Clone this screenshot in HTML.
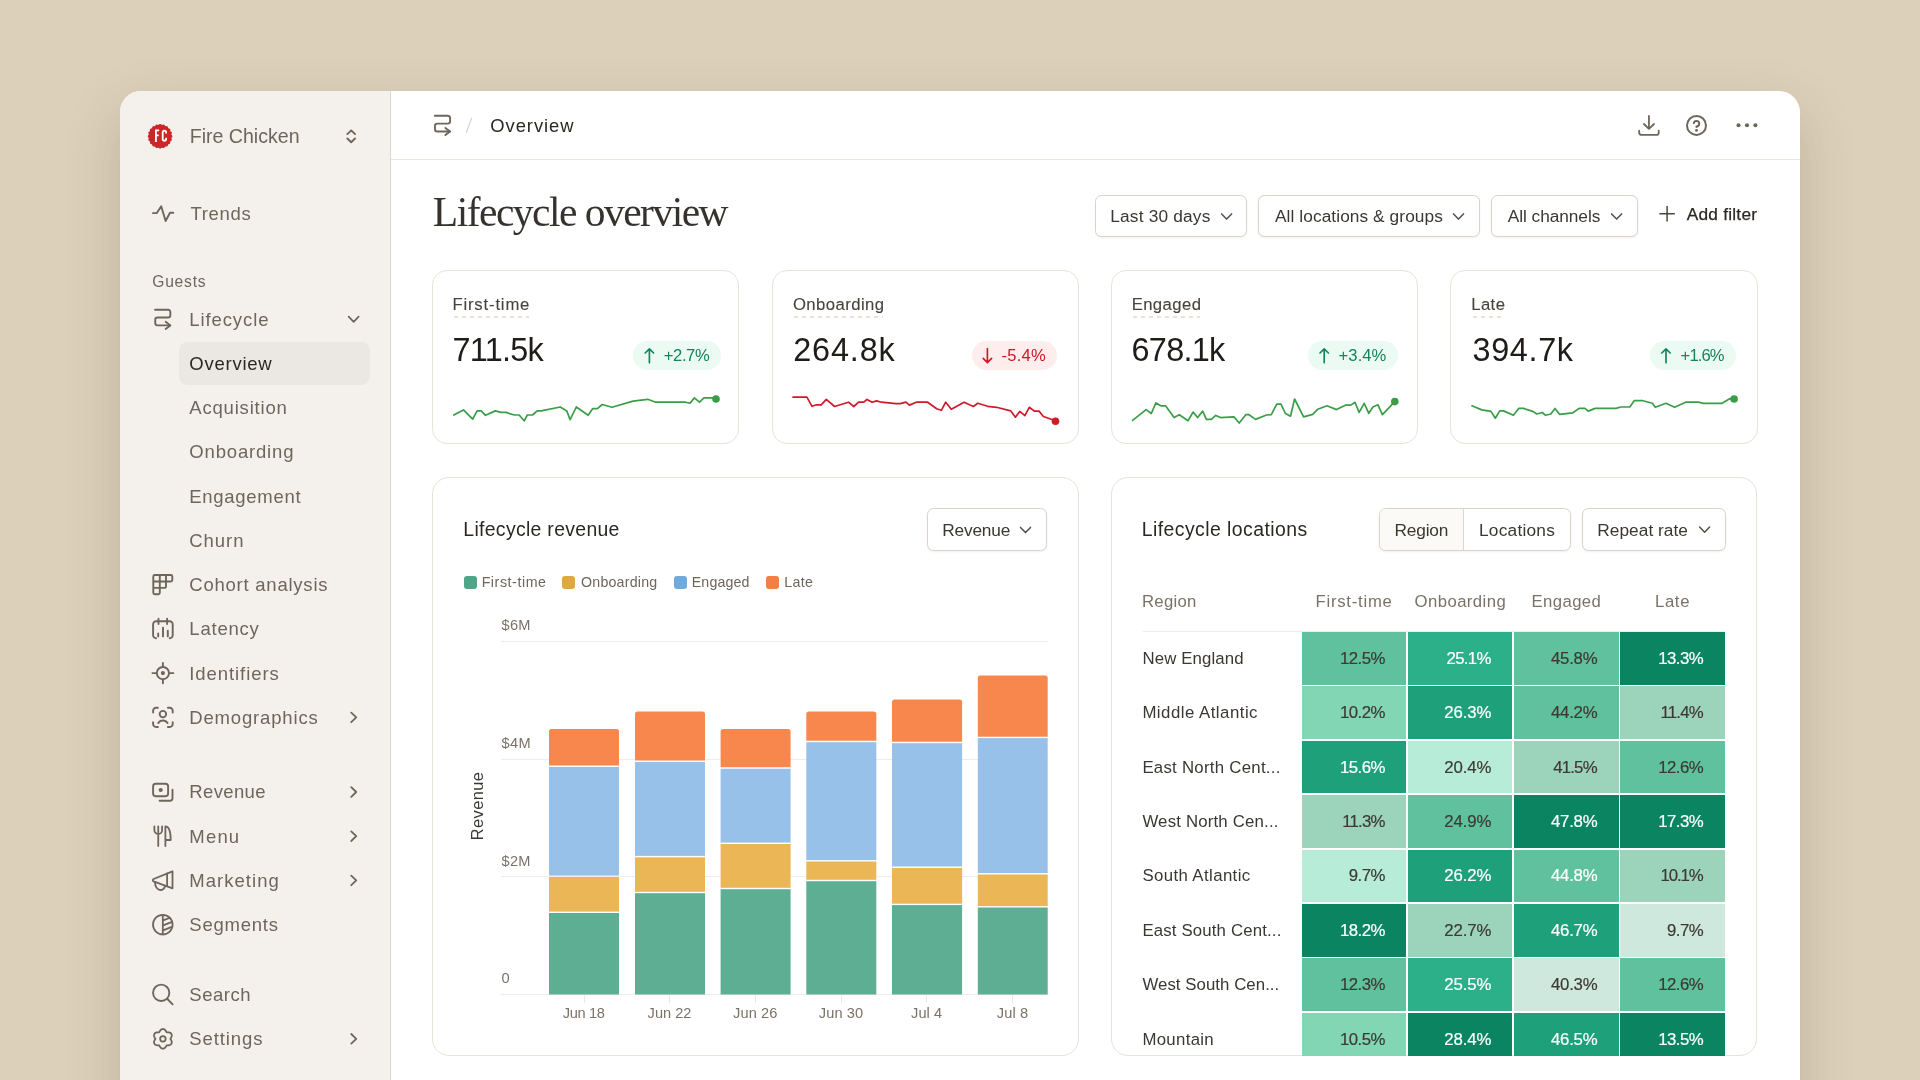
<!DOCTYPE html>
<html lang="en"><head><meta charset="utf-8"><title>Lifecycle overview</title>
<style>
*{box-sizing:border-box;margin:0;padding:0}
html,body{width:1920px;height:1080px;overflow:hidden}
body{background:#dcd0bb;font-family:"Liberation Sans",sans-serif;position:relative}
.win{position:absolute;left:120px;top:91px;width:1680px;height:1100px;border-radius:21px;background:#fff;box-shadow:0 22px 54px 0 rgba(84,68,38,.21);overflow:hidden}
.side{position:absolute;left:0;top:0;width:270.5px;height:100%;background:#f4f1ec;border-right:1.2px solid #ded7cc}
.hline{position:absolute;left:271px;top:68px;right:0;height:1px;background:#ebe7e0}
.abs{position:absolute}
.t{position:absolute;white-space:nowrap;line-height:1;font-kerning:normal}
.tl{position:absolute;left:0;top:0;width:1920px;height:1080px;will-change:transform}
.sf{font-family:"Liberation Serif",serif}
.pill{position:absolute;left:178.8px;top:342.3px;width:190.8px;height:42.6px;border-radius:8.5px;background:#ebe7e2}
.card{position:absolute;border:1.3px solid #e8e3db;border-radius:15px;background:#fff}
.btn{position:absolute;border:1px solid #dad3c7;border-radius:6.5px;background:#fff;box-shadow:0 1px 2px rgba(80,60,30,.08)}
.dash{position:absolute;height:1.5px;background:repeating-linear-gradient(90deg,#e8e2d9 0,#e8e2d9 3.6px,transparent 3.6px,transparent 8px)}
.badge{position:absolute;height:28.8px;border-radius:14.4px}
.hc{position:absolute}
.grid{position:absolute;height:1px;background:#f0ede8;left:500.8px;width:546.8px}
.tick{position:absolute;width:1px;height:7.5px;top:995px;background:#ebe7e1}
.lsq{position:absolute;width:13.2px;height:13.2px;top:576.2px;border-radius:3px}
svg.ov{position:absolute;left:0;top:0;width:1920px;height:1080px;overflow:visible}
</style></head><body>
<div class="win"><div class="side"></div><div class="hline"></div></div>
<div class="pill"></div>

<div class="btn" style="left:1094.6px;top:194.8px;width:152.6px;height:42.2px"></div>
<div class="btn" style="left:1258px;top:194.8px;width:221.8px;height:42.2px"></div>
<div class="btn" style="left:1490.6px;top:194.8px;width:147.2px;height:42.2px"></div>
<div class="card" style="left:432.05px;top:269.7px;width:307.2px;height:174.55px"></div>
<div class="dash" style="left:453.8px;top:316.4px;width:74.9px"></div>
<div class="card" style="left:771.50px;top:269.7px;width:307.2px;height:174.55px"></div>
<div class="dash" style="left:793.7px;top:316.4px;width:89.4px"></div>
<div class="card" style="left:1110.95px;top:269.7px;width:307.2px;height:174.55px"></div>
<div class="dash" style="left:1133.0px;top:316.4px;width:66.9px"></div>
<div class="card" style="left:1450.40px;top:269.7px;width:307.2px;height:174.55px"></div>
<div class="dash" style="left:1472.6px;top:316.4px;width:31.6px"></div>
<div class="badge" style="left:633.3px;top:341.3px;width:87.6px;background:#ebfaf2"></div>
<div class="badge" style="left:971.7px;top:341.3px;width:85.6px;background:#fdeeed"></div>
<div class="badge" style="left:1308.3px;top:341.3px;width:89.6px;background:#ebfaf2"></div>
<div class="badge" style="left:1650.4px;top:341.3px;width:85.6px;background:#ebfaf2"></div>
<div class="card" style="left:432px;top:476.6px;width:646.6px;height:579.4px;border-radius:17px"></div>
<div class="card" style="left:1110.7px;top:476.6px;width:646.8px;height:579.4px;border-radius:17px;overflow:hidden"></div>
<div class="btn" style="left:926.8px;top:508.2px;width:120.5px;height:42.4px"></div>
<div class="btn" style="left:1379.2px;top:508.2px;width:191.8px;height:42.4px;overflow:hidden"><div style="position:absolute;left:0;top:0;width:84px;height:100%;background:#fbfaf7;border-right:1px solid #ddd6cb"></div></div>
<div class="btn" style="left:1581.8px;top:508.2px;width:143.9px;height:42.4px"></div>
<div class="lsq" style="left:463.8px;background:#4fa588"></div>
<div class="lsq" style="left:562.1px;background:#e0a840"></div>
<div class="lsq" style="left:673.8px;background:#70a9dc"></div>
<div class="lsq" style="left:766.2px;background:#f27f45"></div>
<div class="grid" style="top:640.7px"></div>
<div class="grid" style="top:758.5px"></div>
<div class="grid" style="top:876.1px"></div>
<div class="grid" style="top:993.9px"></div>
<div class="tick" style="left:583.5px"></div>
<div class="tick" style="left:669.2px"></div>
<div class="tick" style="left:754.9px"></div>
<div class="tick" style="left:840.7px"></div>
<div class="tick" style="left:926.4px"></div>
<div class="tick" style="left:1012.2px"></div>
<div class="abs" style="left:1143px;top:630.8px;width:581.5px;height:1px;background:#efece7"></div>
<div class="abs" style="left:0;top:0;width:1920px;height:1055.6px;overflow:hidden"><div class="hc" style="left:1302.0px;top:632.0px;width:104.4px;height:52.7px;background:#5fc19d"></div><div class="hc" style="left:1408.0px;top:632.0px;width:104.4px;height:52.7px;background:#2bb089"></div><div class="hc" style="left:1514.2px;top:632.0px;width:104.4px;height:52.7px;background:#5fc19d"></div><div class="hc" style="left:1620.2px;top:632.0px;width:104.4px;height:52.7px;background:#0b8561"></div><div class="hc" style="left:1302.0px;top:686.4px;width:104.4px;height:52.7px;background:#82d6b4"></div><div class="hc" style="left:1408.0px;top:686.4px;width:104.4px;height:52.7px;background:#1ea07a"></div><div class="hc" style="left:1514.2px;top:686.4px;width:104.4px;height:52.7px;background:#5fc19d"></div><div class="hc" style="left:1620.2px;top:686.4px;width:104.4px;height:52.7px;background:#9bd3bb"></div><div class="hc" style="left:1302.0px;top:740.8px;width:104.4px;height:52.7px;background:#1ea07a"></div><div class="hc" style="left:1408.0px;top:740.8px;width:104.4px;height:52.7px;background:#b7ecd9"></div><div class="hc" style="left:1514.2px;top:740.8px;width:104.4px;height:52.7px;background:#9bd3bb"></div><div class="hc" style="left:1620.2px;top:740.8px;width:104.4px;height:52.7px;background:#5fc19d"></div><div class="hc" style="left:1302.0px;top:795.2px;width:104.4px;height:52.7px;background:#9bd3bb"></div><div class="hc" style="left:1408.0px;top:795.2px;width:104.4px;height:52.7px;background:#5fc19d"></div><div class="hc" style="left:1514.2px;top:795.2px;width:104.4px;height:52.7px;background:#0b8561"></div><div class="hc" style="left:1620.2px;top:795.2px;width:104.4px;height:52.7px;background:#0b8561"></div><div class="hc" style="left:1302.0px;top:849.6px;width:104.4px;height:52.7px;background:#b7ecd9"></div><div class="hc" style="left:1408.0px;top:849.6px;width:104.4px;height:52.7px;background:#1ea07a"></div><div class="hc" style="left:1514.2px;top:849.6px;width:104.4px;height:52.7px;background:#5fc19d"></div><div class="hc" style="left:1620.2px;top:849.6px;width:104.4px;height:52.7px;background:#9bd3bb"></div><div class="hc" style="left:1302.0px;top:904.0px;width:104.4px;height:52.7px;background:#0b8561"></div><div class="hc" style="left:1408.0px;top:904.0px;width:104.4px;height:52.7px;background:#9bd3bb"></div><div class="hc" style="left:1514.2px;top:904.0px;width:104.4px;height:52.7px;background:#1ea07a"></div><div class="hc" style="left:1620.2px;top:904.0px;width:104.4px;height:52.7px;background:#cfe8dd"></div><div class="hc" style="left:1302.0px;top:958.4px;width:104.4px;height:52.7px;background:#5fc19d"></div><div class="hc" style="left:1408.0px;top:958.4px;width:104.4px;height:52.7px;background:#2bb089"></div><div class="hc" style="left:1514.2px;top:958.4px;width:104.4px;height:52.7px;background:#cfe8dd"></div><div class="hc" style="left:1620.2px;top:958.4px;width:104.4px;height:52.7px;background:#5fc19d"></div><div class="hc" style="left:1302.0px;top:1012.8px;width:104.4px;height:52.7px;background:#82d6b4"></div><div class="hc" style="left:1408.0px;top:1012.8px;width:104.4px;height:52.7px;background:#0b8561"></div><div class="hc" style="left:1514.2px;top:1012.8px;width:104.4px;height:52.7px;background:#1ea07a"></div><div class="hc" style="left:1620.2px;top:1012.8px;width:104.4px;height:52.7px;background:#0b8561"></div></div>
<svg class="ov" viewBox="0 0 1920 1080">
<path d="M549.0,765.6V731.5a2.5,2.5 0 0 1 2.5,-2.5H616.5a2.5,2.5 0 0 1 2.5,2.5V765.6Z" fill="#f8874e"/>
<rect x="549.0" y="767.0" width="70.0" height="108.6" fill="#98c1e9"/>
<rect x="549.0" y="877.0" width="70.0" height="34.6" fill="#ebb656"/>
<rect x="549.0" y="913.0" width="70.0" height="81.5" fill="#5eae93"/>
<path d="M635.0,760.6V714.0a2.5,2.5 0 0 1 2.5,-2.5H702.5a2.5,2.5 0 0 1 2.5,2.5V760.6Z" fill="#f8874e"/>
<rect x="635.0" y="762.0" width="70.0" height="93.9" fill="#98c1e9"/>
<rect x="635.0" y="857.3" width="70.0" height="34.5" fill="#ebb656"/>
<rect x="635.0" y="893.2" width="70.0" height="101.3" fill="#5eae93"/>
<path d="M720.6,767.3V731.5a2.5,2.5 0 0 1 2.5,-2.5H788.1a2.5,2.5 0 0 1 2.5,2.5V767.3Z" fill="#f8874e"/>
<rect x="720.6" y="768.7" width="70.0" height="73.9" fill="#98c1e9"/>
<rect x="720.6" y="844.0" width="70.0" height="43.8" fill="#ebb656"/>
<rect x="720.6" y="889.2" width="70.0" height="105.3" fill="#5eae93"/>
<path d="M806.3,740.8V714.0a2.5,2.5 0 0 1 2.5,-2.5H873.8a2.5,2.5 0 0 1 2.5,2.5V740.8Z" fill="#f8874e"/>
<rect x="806.3" y="742.2" width="70.0" height="117.9" fill="#98c1e9"/>
<rect x="806.3" y="861.5" width="70.0" height="18.3" fill="#ebb656"/>
<rect x="806.3" y="881.2" width="70.0" height="113.3" fill="#5eae93"/>
<path d="M892.0,741.8V702.0a2.5,2.5 0 0 1 2.5,-2.5H959.6a2.5,2.5 0 0 1 2.5,2.5V741.8Z" fill="#f8874e"/>
<rect x="892.0" y="743.2" width="70.1" height="123.3" fill="#98c1e9"/>
<rect x="892.0" y="867.9" width="70.1" height="35.8" fill="#ebb656"/>
<rect x="892.0" y="905.1" width="70.1" height="89.4" fill="#5eae93"/>
<path d="M977.8,736.7V678.1a2.5,2.5 0 0 1 2.5,-2.5H1045.2a2.5,2.5 0 0 1 2.5,2.5V736.7Z" fill="#f8874e"/>
<rect x="977.8" y="738.1" width="69.9" height="135.0" fill="#98c1e9"/>
<rect x="977.8" y="874.5" width="69.9" height="31.6" fill="#ebb656"/>
<rect x="977.8" y="907.5" width="69.9" height="87.0" fill="#5eae93"/>
<path d="M453.8,415.0 L463.5,409.9 L472.7,419.1 L477.1,410.9 L481.2,410.9 L485.5,415.3 L495.3,410.9 L501.1,412.4 L506.0,412.4 L514.3,415.0 L519.1,415.0 L524.2,420.8 L527.4,415.0 L532.5,415.0 L537.2,410.9 L541.3,410.9 L560.2,407.0 L566.8,410.9 L570.1,419.7 L576.3,407.0 L588.2,415.3 L592.6,408.7 L597.4,408.7 L602.2,404.5 L612.0,407.3 L633.1,401.1 L647.7,399.3 L655.7,402.2 L685.6,402.2 L690.0,403.3 L694.4,397.9 L699.5,402.2 L703.9,397.9 L712.6,397.9 L716.0,399.0" fill="none" stroke="#3b9d48" stroke-width="1.7" stroke-linejoin="round" stroke-linecap="round"/><circle cx="716.0" cy="399.0" r="3.8" fill="#3b9d48"/>
<path d="M793.0,397.1 L806.9,397.1 L812.0,406.3 L816.4,404.8 L821.2,404.8 L826.3,399.4 L834.6,406.5 L848.4,402.2 L853.8,406.5 L858.6,402.2 L863.8,402.2 L867.0,399.4 L872.2,402.2 L876.6,400.9 L881.3,402.2 L895.8,403.6 L900.2,403.6 L906.0,402.2 L909.4,405.1 L916.3,402.2 L927.6,402.2 L936.7,408.7 L941.3,410.3 L945.7,402.2 L951.3,409.2 L964.1,402.2 L973.4,406.5 L977.8,403.3 L987.7,406.3 L996.5,407.3 L1010.8,410.9 L1015.4,417.2 L1019.8,411.4 L1024.9,415.7 L1029.3,407.3 L1034.4,411.1 L1039.0,411.1 L1043.4,416.5 L1052.6,419.7 L1055.5,421.3" fill="none" stroke="#cf1a2b" stroke-width="1.7" stroke-linejoin="round" stroke-linecap="round"/><circle cx="1055.5" cy="421.3" r="3.8" fill="#cf1a2b"/>
<path d="M1132.6,420.4 L1146.1,409.6 L1151.3,413.5 L1155.9,402.9 L1160.7,405.8 L1165.5,405.8 L1174.1,417.5 L1179.3,414.7 L1188.0,420.8 L1193.1,412.1 L1197.6,417.5 L1202.7,411.1 L1206.4,419.4 L1211.3,419.4 L1215.7,415.4 L1220.5,417.6 L1233.9,416.9 L1239.2,423.0 L1245.8,414.7 L1249.0,414.7 L1255.5,419.4 L1266.5,415.0 L1271.3,414.7 L1276.7,404.1 L1281.0,404.1 L1285.4,413.5 L1290.5,416.2 L1294.6,399.0 L1303.6,416.9 L1312.7,414.4 L1317.8,409.2 L1327.0,405.8 L1336.5,409.6 L1345.9,405.1 L1350.8,405.1 L1355.0,402.3 L1359.1,412.4 L1364.2,403.3 L1368.8,413.3 L1372.9,407.0 L1378.0,404.8 L1382.4,414.7 L1394.8,401.6" fill="none" stroke="#3b9d48" stroke-width="1.7" stroke-linejoin="round" stroke-linecap="round"/><circle cx="1394.8" cy="401.6" r="3.8" fill="#3b9d48"/>
<path d="M1472.0,405.8 L1481.8,409.9 L1491.0,411.4 L1495.3,418.2 L1499.7,410.9 L1503.6,410.9 L1513.4,415.3 L1518.7,408.4 L1523.6,408.4 L1532.8,411.4 L1536.8,414.0 L1542.3,412.5 L1545.6,415.3 L1550.8,414.0 L1555.0,408.4 L1559.5,414.3 L1572.9,412.8 L1579.2,408.4 L1584.9,408.4 L1588.2,411.1 L1595.2,408.4 L1615.9,408.4 L1620.8,407.0 L1629.8,407.0 L1634.2,400.7 L1642.9,400.7 L1652.4,403.3 L1655.3,407.3 L1666.0,403.3 L1674.6,407.3 L1685.7,402.2 L1698.3,402.2 L1703.4,403.3 L1722.0,403.3 L1729.7,398.7 L1734.1,399.0" fill="none" stroke="#3b9d48" stroke-width="1.7" stroke-linejoin="round" stroke-linecap="round"/><circle cx="1734.1" cy="399.0" r="3.8" fill="#3b9d48"/>
<path d="M172.47,136.30L172.36,136.73L172.09,137.14L171.78,137.53L171.54,137.91L171.48,138.31L171.58,138.74L171.77,139.21L171.90,139.68L171.86,140.12L171.63,140.50L171.25,140.80L170.83,141.08L170.49,141.37L170.30,141.72L170.27,142.17L170.30,142.67L170.27,143.16L170.11,143.57L169.77,143.86L169.31,144.03L168.82,144.16L168.41,144.33L168.13,144.61L167.96,145.02L167.83,145.51L167.66,145.97L167.37,146.31L166.96,146.47L166.47,146.50L165.97,146.47L165.52,146.50L165.17,146.69L164.88,147.03L164.60,147.45L164.30,147.83L163.92,148.06L163.48,148.10L163.01,147.97L162.54,147.78L162.11,147.68L161.71,147.74L161.33,147.98L160.94,148.29L160.53,148.56L160.10,148.67L159.67,148.56L159.26,148.29L158.87,147.98L158.49,147.74L158.09,147.68L157.66,147.78L157.19,147.97L156.72,148.10L156.28,148.06L155.90,147.83L155.60,147.45L155.32,147.03L155.03,146.69L154.68,146.50L154.23,146.47L153.73,146.50L153.24,146.47L152.83,146.31L152.54,145.97L152.37,145.51L152.24,145.02L152.07,144.61L151.79,144.33L151.38,144.16L150.89,144.03L150.43,143.86L150.09,143.57L149.93,143.16L149.90,142.67L149.93,142.17L149.90,141.72L149.71,141.37L149.37,141.08L148.95,140.80L148.57,140.50L148.34,140.12L148.30,139.68L148.43,139.21L148.62,138.74L148.72,138.31L148.66,137.91L148.42,137.53L148.11,137.14L147.84,136.73L147.73,136.30L147.84,135.87L148.11,135.46L148.42,135.07L148.66,134.69L148.72,134.29L148.62,133.86L148.43,133.39L148.30,132.92L148.34,132.48L148.57,132.10L148.95,131.80L149.37,131.52L149.71,131.23L149.90,130.88L149.93,130.43L149.90,129.93L149.93,129.44L150.09,129.03L150.43,128.74L150.89,128.57L151.38,128.44L151.79,128.27L152.07,127.99L152.24,127.58L152.37,127.09L152.54,126.63L152.83,126.29L153.24,126.13L153.73,126.10L154.23,126.13L154.68,126.10L155.03,125.91L155.32,125.57L155.60,125.15L155.90,124.77L156.28,124.54L156.72,124.50L157.19,124.63L157.66,124.82L158.09,124.92L158.49,124.86L158.87,124.62L159.26,124.31L159.67,124.04L160.10,123.93L160.53,124.04L160.94,124.31L161.33,124.62L161.71,124.86L162.11,124.92L162.54,124.82L163.01,124.63L163.48,124.50L163.92,124.54L164.30,124.77L164.60,125.15L164.88,125.57L165.17,125.91L165.52,126.10L165.97,126.13L166.47,126.10L166.96,126.13L167.37,126.29L167.66,126.63L167.83,127.09L167.96,127.58L168.13,127.99L168.41,128.27L168.82,128.44L169.31,128.57L169.77,128.74L170.11,129.03L170.27,129.44L170.30,129.93L170.27,130.43L170.30,130.88L170.49,131.23L170.83,131.52L171.25,131.80L171.63,132.10L171.86,132.48L171.90,132.92L171.77,133.39L171.58,133.86L171.48,134.29L171.54,134.69L171.78,135.07L172.09,135.46L172.36,135.87Z" fill="#c92728"/>
<path d="M155.0,129.5h4.15v1.8h-2.3v3.3h1.9v1.75h-1.9v5.6h-1.85z" fill="#fff"/>
<path d="M167.0,133.6v-1.3a2.6,2.6 0 0 0 -5.2,0v6.8a2.6,2.6 0 0 0 5.2,0v-1.4h-1.8v1.3a0.8,0.8 0 0 1 -1.6,0v-6.6a0.8,0.8 0 0 1 1.6,0v1.2z" fill="#fff"/>
<g transform="translate(351.2,136.3)" fill="none" stroke="#6e665b" stroke-width="1.9" stroke-linecap="round" stroke-linejoin="round"><path d="M-3.85,-2.2L0,-5.9L3.85,-2.2"/><path d="M-3.85,2.2L0,5.9L3.85,2.2"/></g>
<g transform="translate(0,0)" fill="none" stroke="#6e665b" stroke-width="1.9" stroke-linecap="round" stroke-linejoin="round"><path d="M152.9,213.1H156.8L161.2,206.2L165.6,221L170,212.8H173.3"/></g>
<g transform="translate(162.75,319.5)" fill="none" stroke="#6e665b" stroke-width="1.9" stroke-linecap="round" stroke-linejoin="round"><path d="M-7.7,-9.8H5.3a2.3,2.3 0 0 1 2.3,2.3V-4.3a2.3,2.3 0 0 1 -2.3,2.3H-5.2a2.3,2.3 0 0 0 -2.3,2.3V3.6a2.3,2.3 0 0 0 2.3,2.3H7.4"/><path d="M2.9,2.3L7.6,5.9L2.9,9.5"/></g>
<g transform="translate(353.65,319.2)" fill="none" stroke="#6e665b" stroke-width="1.7" stroke-linecap="round" stroke-linejoin="round"><path d="M-5.0,-2.6L0,2.6L5.0,-2.6"/></g>
<g transform="translate(162.8,584.6)" fill="none" stroke="#6e665b" stroke-width="1.9" stroke-linecap="round" stroke-linejoin="round"><path d="M-8,-9.6H8a1.5,1.5 0 0 1 1.5,1.5V-4.6a1.5,1.5 0 0 1 -1.5,1.5H3.2V1.8a1.5,1.5 0 0 1 -1.5,1.5H-3V8.1a1.5,1.5 0 0 1 -1.5,1.5H-8a1.5,1.5 0 0 1 -1.5,-1.5V-8.1a1.5,1.5 0 0 1 1.5,-1.5Z"/><path stroke-linecap="butt" d="M-3,-9.6V3.3M3.2,-9.6V-3.1M-9.5,-3.1H3.2M-9.5,3.3H-3"/></g>
<g transform="translate(162.9,629.0)" fill="none" stroke="#6e665b" stroke-width="1.9" stroke-linecap="round" stroke-linejoin="round"><path d="M-6.9,9.2H-6.8a3,3 0 0 1 -3,-3V-4.7a3,3 0 0 1 3,-3H6.8a3,3 0 0 1 3,3V6.2a3,3 0 0 1 -3,3"/><path d="M-4.4,-10.3V-4.9M4.2,-10.3V-4.9M-4.7,4.4V7.4M0.1,-1.4V7.4M4.9,1.7V7.4"/></g>
<g transform="translate(162.9,673.1)" fill="none" stroke="#6e665b" stroke-width="1.9" stroke-linecap="round" stroke-linejoin="round"><circle r="6.1"/><circle r="2.1" fill="#6e665b" stroke="none"/><path d="M-10.5,0H-6.5M6.5,0H10.5M0,-10.2V-6.5M0,6.5V10.2"/></g>
<g transform="translate(162.9,717.4)" fill="none" stroke="#6e665b" stroke-width="1.9" stroke-linecap="round" stroke-linejoin="round"><path d="M-9.8,-4.8V-6.6a3,3 0 0 1 3,-3H-5M5,-9.6H6.8a3,3 0 0 1 3,3V-4.8M9.8,4.8V6.6a3,3 0 0 1 -3,3H5M-5,9.6H-6.8a3,3 0 0 1 -3,-3V4.8"/><circle cy="-3.3" r="3.25"/><path d="M-4.6,5.7A5.4,5.4 0 0 1 4.6,5.7"/></g>
<g transform="translate(353.75,717.4)" fill="none" stroke="#6e665b" stroke-width="1.8" stroke-linecap="round" stroke-linejoin="round"><path d="M-2.5,-4.8L2.5,0L-2.5,4.8"/></g>
<g transform="translate(0,0)" fill="none" stroke="#6e665b" stroke-width="1.9" stroke-linecap="round" stroke-linejoin="round"><rect x="153.1" y="783.8" width="15" height="12.4" rx="2.6"/><circle cx="160.7" cy="790" r="2.1" fill="#6e665b" stroke="none"/><path d="M172.5,789.7V798.4a2.3,2.3 0 0 1 -2.3,2.3H159.6"/></g>
<g transform="translate(353.75,792.0)" fill="none" stroke="#6e665b" stroke-width="1.8" stroke-linecap="round" stroke-linejoin="round"><path d="M-2.5,-4.8L2.5,0L-2.5,4.8"/></g>
<g transform="translate(0,0)" fill="none" stroke="#6e665b" stroke-width="1.8" stroke-linecap="round" stroke-linejoin="round"><path d="M158.25,826.3V846M154.4,826.3V830.2a3.85,3.85 0 0 0 7.7,0V826.3"/><path d="M165.4,846V826.4C168.6,826.4 170.7,830.5 170.7,840H165.4"/></g>
<g transform="translate(353.75,836.2)" fill="none" stroke="#6e665b" stroke-width="1.8" stroke-linecap="round" stroke-linejoin="round"><path d="M-2.5,-4.8L2.5,0L-2.5,4.8"/></g>
<g transform="translate(0,0)" fill="none" stroke="#6e665b" stroke-width="1.8" stroke-linecap="round" stroke-linejoin="round"><path d="M172.5,871.3V888.3L153.6,881.4a1.3,1.3 0 0 1 0,-2.4Z"/><path d="M167.1,873.4V886.2"/><path d="M155,882.6C155,887 158,890 160.3,890C162.6,890 164.4,888.6 165,886.2"/></g>
<g transform="translate(353.75,880.4)" fill="none" stroke="#6e665b" stroke-width="1.8" stroke-linecap="round" stroke-linejoin="round"><path d="M-2.5,-4.8L2.5,0L-2.5,4.8"/></g>
<g transform="translate(162.8,924.6)" fill="none" stroke="#6e665b" stroke-width="1.8" stroke-linecap="round" stroke-linejoin="round"><circle r="9.8"/><path d="M0,-9.8V9.8M0.3,-4.3L6.8,-6.8M0.3,0.7L9.3,-2.8M0.3,5.8L8.3,2.6"/></g>
<g transform="translate(0,0)" fill="none" stroke="#6e665b" stroke-width="1.9" stroke-linecap="round" stroke-linejoin="round"><circle cx="161.2" cy="992.8" r="8.15"/><path d="M167.4,999L172.6,1004.3"/></g>
<g transform="translate(162.9,1038.8)" fill="none" stroke="#6e665b" stroke-width="1.8" stroke-linecap="round" stroke-linejoin="round"><path d="M7.50,0.00L7.72,0.40L7.99,0.84L8.26,1.31L8.50,1.81L8.69,2.33L8.81,2.86L8.86,3.40L8.83,3.93L8.70,4.43L8.49,4.90L8.19,5.32L7.82,5.68L7.38,5.97L6.89,6.20L6.36,6.36L5.81,6.46L5.26,6.50L4.72,6.50L4.21,6.48L3.75,6.50L3.51,6.89L3.27,7.34L3.00,7.81L2.69,8.26L2.33,8.69L1.93,9.07L1.49,9.38L1.01,9.61L0.51,9.75L0.00,9.80L-0.51,9.75L-1.01,9.61L-1.49,9.38L-1.93,9.07L-2.33,8.69L-2.69,8.26L-3.00,7.81L-3.27,7.34L-3.51,6.89L-3.75,6.50L-4.21,6.48L-4.72,6.50L-5.26,6.50L-5.81,6.46L-6.36,6.36L-6.89,6.20L-7.38,5.97L-7.82,5.68L-8.19,5.32L-8.49,4.90L-8.70,4.43L-8.83,3.93L-8.86,3.40L-8.81,2.86L-8.69,2.33L-8.50,1.81L-8.26,1.31L-7.99,0.84L-7.72,0.40L-7.50,0.00L-7.72,-0.40L-7.99,-0.84L-8.26,-1.31L-8.50,-1.81L-8.69,-2.33L-8.81,-2.86L-8.86,-3.40L-8.83,-3.93L-8.70,-4.43L-8.49,-4.90L-8.19,-5.32L-7.82,-5.68L-7.38,-5.97L-6.89,-6.20L-6.36,-6.36L-5.81,-6.46L-5.26,-6.50L-4.72,-6.50L-4.21,-6.48L-3.75,-6.50L-3.51,-6.89L-3.27,-7.34L-3.00,-7.81L-2.69,-8.26L-2.33,-8.69L-1.93,-9.07L-1.49,-9.38L-1.01,-9.61L-0.51,-9.75L-0.00,-9.80L0.51,-9.75L1.01,-9.61L1.49,-9.38L1.93,-9.07L2.33,-8.69L2.69,-8.26L3.00,-7.81L3.27,-7.34L3.51,-6.89L3.75,-6.50L4.21,-6.48L4.72,-6.50L5.26,-6.50L5.81,-6.46L6.36,-6.36L6.89,-6.20L7.38,-5.97L7.82,-5.68L8.19,-5.32L8.49,-4.90L8.70,-4.43L8.83,-3.93L8.86,-3.40L8.81,-2.86L8.69,-2.33L8.50,-1.81L8.26,-1.31L7.99,-0.84L7.72,-0.40Z"/><circle r="2.75"/></g>
<g transform="translate(353.75,1038.8)" fill="none" stroke="#6e665b" stroke-width="1.8" stroke-linecap="round" stroke-linejoin="round"><path d="M-2.5,-4.8L2.5,0L-2.5,4.8"/></g>
<g transform="translate(442.5,125.6)" fill="none" stroke="#6e665b" stroke-width="1.9" stroke-linecap="round" stroke-linejoin="round"><path d="M-7.7,-9.8H5.3a2.3,2.3 0 0 1 2.3,2.3V-4.3a2.3,2.3 0 0 1 -2.3,2.3H-5.2a2.3,2.3 0 0 0 -2.3,2.3V3.6a2.3,2.3 0 0 0 2.3,2.3H7.4"/><path d="M2.9,2.3L7.6,5.9L2.9,9.5"/></g>
<path d="M466.2,133L471.8,117.6" stroke="#d9d3c9" stroke-width="1.2" fill="none"/>
<g transform="translate(0,0)" fill="none" stroke="#6e665b" stroke-width="1.8" stroke-linecap="round" stroke-linejoin="round"><path d="M1648.95,115.8V128.6M1643.9,124L1648.95,128.9L1654,124"/><path d="M1639.2,130.6V132.7a2.2,2.2 0 0 0 2.2,2.2H1656.5a2.2,2.2 0 0 0 2.2,-2.2V130.6"/></g>
<g transform="translate(1696.5,125.4)" fill="none" stroke="#6e665b" stroke-width="2.0" stroke-linecap="round" stroke-linejoin="round"><circle r="9.5"/><path d="M-2.7,-2.3A2.75,2.75 0 1 1 0,1.0V1.5"/><circle cy="5" r="1.45" fill="#6e665b" stroke="none"/></g>
<circle cx="1738.5" cy="125.3" r="2.05" fill="#6e665b"/>
<circle cx="1747.0" cy="125.3" r="2.05" fill="#6e665b"/>
<circle cx="1755.4" cy="125.3" r="2.05" fill="#6e665b"/>
<g transform="translate(1226.6,216.5)" fill="none" stroke="#57514a" stroke-width="1.5" stroke-linecap="round" stroke-linejoin="round"><path d="M-5.0,-2.6L0,2.6L5.0,-2.6"/></g>
<g transform="translate(1458.5,216.5)" fill="none" stroke="#57514a" stroke-width="1.5" stroke-linecap="round" stroke-linejoin="round"><path d="M-5.0,-2.6L0,2.6L5.0,-2.6"/></g>
<g transform="translate(1616.6,216.5)" fill="none" stroke="#57514a" stroke-width="1.5" stroke-linecap="round" stroke-linejoin="round"><path d="M-5.0,-2.6L0,2.6L5.0,-2.6"/></g>
<g transform="translate(1025.5,530.0)" fill="none" stroke="#57514a" stroke-width="1.5" stroke-linecap="round" stroke-linejoin="round"><path d="M-5.0,-2.6L0,2.6L5.0,-2.6"/></g>
<g transform="translate(1704.6,529.7)" fill="none" stroke="#57514a" stroke-width="1.5" stroke-linecap="round" stroke-linejoin="round"><path d="M-5.0,-2.6L0,2.6L5.0,-2.6"/></g>
<g transform="translate(1667.1,213.7)" fill="none" stroke="#4b463f" stroke-width="1.5" stroke-linecap="round" stroke-linejoin="round"><path d="M-7.2,0H7.2M0,-7.2V7.2"/></g>
<g transform="translate(649.4,355.6)" fill="none" stroke="#12845e" stroke-width="1.65" stroke-linecap="round" stroke-linejoin="round"><path d="M0,7.2V-6.6M-4.2,-2.6L0,-6.8L4.2,-2.6"/></g>
<g transform="translate(987.4,355.8)" fill="none" stroke="#cd1628" stroke-width="1.65" stroke-linecap="round" stroke-linejoin="round"><path d="M0,-7.2V6.6M-4.2,2.6L0,6.8L4.2,2.6"/></g>
<g transform="translate(1324.2,355.6)" fill="none" stroke="#12845e" stroke-width="1.65" stroke-linecap="round" stroke-linejoin="round"><path d="M0,7.2V-6.6M-4.2,-2.6L0,-6.8L4.2,-2.6"/></g>
<g transform="translate(1666.0,355.6)" fill="none" stroke="#12845e" stroke-width="1.65" stroke-linecap="round" stroke-linejoin="round"><path d="M0,7.2V-6.6M-4.2,-2.6L0,-6.8L4.2,-2.6"/></g>
</svg>
<div class="tl">
<span class="t" style="top:126.96px;font-size:19.6px;color:#6e665b;letter-spacing:-0.012px;left:189.69px;">Fire Chicken</span>
<span class="t" style="top:204.89px;font-size:18.5px;color:#6e665b;letter-spacing:0.719px;left:190.38px;">Trends</span>
<span class="t" style="top:274.44px;font-size:15.6px;color:#6e665b;letter-spacing:0.786px;left:152.22px;">Guests</span>
<span class="t" style="top:310.89px;font-size:18.5px;color:#6e665b;letter-spacing:0.895px;left:189.30px;">Lifecycle</span>
<span class="t" style="top:355.09px;font-size:18.5px;color:#2b2723;letter-spacing:0.762px;left:189.30px;">Overview</span>
<span class="t" style="top:399.29px;font-size:18.5px;color:#6e665b;letter-spacing:0.807px;left:189.30px;">Acquisition</span>
<span class="t" style="top:443.49px;font-size:18.5px;color:#6e665b;letter-spacing:0.832px;left:189.30px;">Onboarding</span>
<span class="t" style="top:487.69px;font-size:18.5px;color:#6e665b;letter-spacing:0.705px;left:189.30px;">Engagement</span>
<span class="t" style="top:531.89px;font-size:18.5px;color:#6e665b;letter-spacing:0.963px;left:189.30px;">Churn</span>
<span class="t" style="top:576.09px;font-size:18.5px;color:#6e665b;letter-spacing:0.765px;left:189.30px;">Cohort analysis</span>
<span class="t" style="top:620.29px;font-size:18.5px;color:#6e665b;letter-spacing:0.793px;left:189.30px;">Latency</span>
<span class="t" style="top:664.69px;font-size:18.5px;color:#6e665b;letter-spacing:0.927px;left:189.30px;">Identifiers</span>
<span class="t" style="top:708.89px;font-size:18.5px;color:#6e665b;letter-spacing:0.837px;left:189.30px;">Demographics</span>
<span class="t" style="top:783.39px;font-size:18.5px;color:#6e665b;letter-spacing:0.348px;left:189.30px;">Revenue</span>
<span class="t" style="top:827.59px;font-size:18.5px;color:#6e665b;letter-spacing:1.190px;left:189.30px;">Menu</span>
<span class="t" style="top:871.89px;font-size:18.5px;color:#6e665b;letter-spacing:1.035px;left:189.30px;">Marketing</span>
<span class="t" style="top:916.09px;font-size:18.5px;color:#6e665b;letter-spacing:0.759px;left:189.30px;">Segments</span>
<span class="t" style="top:985.89px;font-size:18.5px;color:#6e665b;letter-spacing:0.505px;left:189.30px;">Search</span>
<span class="t" style="top:1030.09px;font-size:18.5px;color:#6e665b;letter-spacing:0.895px;left:189.30px;">Settings</span>
<span class="t" style="top:117.17px;font-size:18.4px;color:#2b2723;letter-spacing:0.935px;left:490.33px;">Overview</span>
<span class="t sf" style="top:191.54px;font-size:41.5px;color:#36322d;letter-spacing:-1.510px;left:432.80px;">Lifecycle overview</span>
<span class="t" style="top:208.11px;font-size:17.3px;color:#3b3732;letter-spacing:0.186px;left:1110.28px;">Last 30 days</span>
<span class="t" style="top:208.11px;font-size:17.3px;color:#3b3732;letter-spacing:0.081px;left:1274.97px;">All locations &amp; groups</span>
<span class="t" style="top:208.11px;font-size:17.3px;color:#3b3732;letter-spacing:-0.066px;left:1507.87px;">All channels</span>
<span class="t" style="top:205.61px;font-size:17.3px;color:#2b2723;letter-spacing:0.239px;-webkit-text-stroke:0.25px #2b2723;left:1686.67px;">Add filter</span>
<span class="t" style="top:296.81px;font-size:16.7px;color:#48433d;letter-spacing:0.827px;-webkit-text-stroke:0.12px #48433d;left:452.43px;">First-time</span>
<span class="t" style="top:334.32px;font-size:32.4px;color:#1f1c19;letter-spacing:-0.712px;left:452.54px;">711.5k</span>
<span class="t" style="top:348.10px;font-size:16.6px;color:#12845e;letter-spacing:-0.407px;left:663.79px;">+2.7%</span>
<span class="t" style="top:296.81px;font-size:16.7px;color:#48433d;letter-spacing:0.444px;-webkit-text-stroke:0.12px #48433d;left:792.91px;">Onboarding</span>
<span class="t" style="top:334.32px;font-size:32.4px;color:#1f1c19;letter-spacing:0.861px;left:793.17px;">264.8k</span>
<span class="t" style="top:348.10px;font-size:16.6px;color:#cd1628;letter-spacing:0.241px;left:1001.46px;">-5.4%</span>
<span class="t" style="top:296.81px;font-size:16.7px;color:#48433d;letter-spacing:0.414px;-webkit-text-stroke:0.12px #48433d;left:1131.63px;">Engaged</span>
<span class="t" style="top:334.32px;font-size:32.4px;color:#1f1c19;letter-spacing:-0.696px;left:1131.55px;">678.1k</span>
<span class="t" style="top:348.10px;font-size:16.6px;color:#12845e;letter-spacing:0.068px;left:1338.59px;">+3.4%</span>
<span class="t" style="top:296.81px;font-size:16.7px;color:#48433d;letter-spacing:0.403px;-webkit-text-stroke:0.12px #48433d;left:1471.23px;">Late</span>
<span class="t" style="top:334.32px;font-size:32.4px;color:#1f1c19;letter-spacing:0.661px;left:1472.47px;">394.7k</span>
<span class="t" style="top:348.10px;font-size:16.6px;color:#12845e;letter-spacing:-0.882px;left:1680.59px;">+1.6%</span>
<span class="t" style="top:520.13px;font-size:19.4px;color:#2b2723;letter-spacing:0.324px;left:463.31px;">Lifecycle revenue</span>
<span class="t" style="top:521.51px;font-size:17.3px;color:#3b3732;letter-spacing:-0.194px;left:942.28px;">Revenue</span>
<span class="t" style="top:575.13px;font-size:14.2px;color:#6e665b;letter-spacing:0.582px;left:481.64px;">First-time</span>
<span class="t" style="top:575.13px;font-size:14.2px;color:#6e665b;letter-spacing:0.220px;left:581.03px;">Onboarding</span>
<span class="t" style="top:575.13px;font-size:14.2px;color:#6e665b;letter-spacing:0.154px;left:691.74px;">Engaged</span>
<span class="t" style="top:575.13px;font-size:14.2px;color:#6e665b;letter-spacing:0.353px;left:784.24px;">Late</span>
<span class="t" style="top:618.49px;font-size:14.6px;color:#7a7267;letter-spacing:0.326px;left:501.44px;">$6M</span>
<span class="t" style="top:736.29px;font-size:14.6px;color:#7a7267;letter-spacing:0.426px;left:501.44px;">$4M</span>
<span class="t" style="top:853.59px;font-size:14.6px;color:#7a7267;letter-spacing:0.326px;left:501.44px;">$2M</span>
<span class="t" style="top:970.99px;font-size:14.6px;color:#7a7267;left:501.43px;">0</span>
<span class="t" style="top:1005.94px;font-size:14.6px;color:#7a7267;letter-spacing:-0.375px;left:583.61px;transform:translateX(-50%);">Jun 18</span>
<span class="t" style="top:1005.94px;font-size:14.6px;color:#7a7267;letter-spacing:0.005px;left:669.55px;transform:translateX(-50%);">Jun 22</span>
<span class="t" style="top:1005.94px;font-size:14.6px;color:#7a7267;letter-spacing:0.087px;left:755.25px;transform:translateX(-50%);">Jun 26</span>
<span class="t" style="top:1005.94px;font-size:14.6px;color:#7a7267;letter-spacing:0.113px;left:841.03px;transform:translateX(-50%);">Jun 30</span>
<span class="t" style="top:1005.94px;font-size:14.6px;color:#7a7267;letter-spacing:0.054px;left:926.63px;transform:translateX(-50%);">Jul 4</span>
<span class="t" style="top:1005.94px;font-size:14.6px;color:#7a7267;letter-spacing:0.106px;left:1012.55px;transform:translateX(-50%);">Jul 8</span>
<span class="t" style="top:520.33px;font-size:19.4px;color:#2b2723;letter-spacing:0.442px;left:1141.81px;">Lifecycle locations</span>
<span class="t" style="top:521.51px;font-size:17.3px;color:#3b3732;letter-spacing:-0.176px;left:1394.48px;">Region</span>
<span class="t" style="top:521.51px;font-size:17.3px;color:#3b3732;letter-spacing:0.236px;left:1478.98px;">Locations</span>
<span class="t" style="top:521.51px;font-size:17.3px;color:#3b3732;letter-spacing:0.039px;left:1597.28px;">Repeat rate</span>
<span class="t" style="top:593.61px;font-size:16.7px;color:#7a7267;letter-spacing:0.287px;left:1142.03px;">Region</span>
<span class="t" style="top:593.61px;font-size:16.7px;color:#7a7267;letter-spacing:0.771px;left:1354.07px;transform:translateX(-50%);">First-time</span>
<span class="t" style="top:593.61px;font-size:16.7px;color:#7a7267;letter-spacing:0.444px;left:1460.37px;transform:translateX(-50%);">Onboarding</span>
<span class="t" style="top:593.61px;font-size:16.7px;color:#7a7267;letter-spacing:0.414px;left:1566.36px;transform:translateX(-50%);">Engaged</span>
<span class="t" style="top:593.61px;font-size:16.7px;color:#7a7267;letter-spacing:0.670px;left:1672.52px;transform:translateX(-50%);">Late</span>
<span class="t" style="top:650.83px;font-size:16.8px;color:#3b3732;letter-spacing:0.143px;left:1142.40px;">New England</span>
<span class="t" style="top:650.83px;font-size:16.8px;color:#3d3934;letter-spacing:-0.564px;-webkit-text-stroke:0.2px #3d3934;right:535.16px;">12.5%</span>
<span class="t" style="top:650.83px;font-size:16.8px;color:#ffffff;letter-spacing:-0.673px;-webkit-text-stroke:0.2px #ffffff;right:429.27px;">25.1%</span>
<span class="t" style="top:650.83px;font-size:16.8px;color:#3d3934;letter-spacing:-0.238px;-webkit-text-stroke:0.2px #3d3934;right:322.64px;">45.8%</span>
<span class="t" style="top:650.83px;font-size:16.8px;color:#ffffff;letter-spacing:-0.564px;-webkit-text-stroke:0.2px #ffffff;right:216.96px;">13.3%</span>
<span class="t" style="top:705.23px;font-size:16.8px;color:#3b3732;letter-spacing:0.493px;left:1142.40px;">Middle Atlantic</span>
<span class="t" style="top:705.23px;font-size:16.8px;color:#3d3934;letter-spacing:-0.564px;-webkit-text-stroke:0.2px #3d3934;right:535.16px;">10.2%</span>
<span class="t" style="top:705.23px;font-size:16.8px;color:#ffffff;letter-spacing:-0.123px;-webkit-text-stroke:0.2px #ffffff;right:428.72px;">26.3%</span>
<span class="t" style="top:705.23px;font-size:16.8px;color:#3d3934;letter-spacing:-0.238px;-webkit-text-stroke:0.2px #3d3934;right:322.64px;">44.2%</span>
<span class="t" style="top:705.23px;font-size:16.8px;color:#3d3934;letter-spacing:-0.803px;-webkit-text-stroke:0.2px #3d3934;right:217.20px;">11.4%</span>
<span class="t" style="top:759.63px;font-size:16.8px;color:#3b3732;letter-spacing:0.270px;left:1142.40px;">East North Cent...</span>
<span class="t" style="top:759.63px;font-size:16.8px;color:#ffffff;letter-spacing:-0.564px;-webkit-text-stroke:0.2px #ffffff;right:535.16px;">15.6%</span>
<span class="t" style="top:759.63px;font-size:16.8px;color:#3d3934;letter-spacing:-0.123px;-webkit-text-stroke:0.2px #3d3934;right:428.72px;">20.4%</span>
<span class="t" style="top:759.63px;font-size:16.8px;color:#3d3934;letter-spacing:-0.788px;-webkit-text-stroke:0.2px #3d3934;right:323.19px;">41.5%</span>
<span class="t" style="top:759.63px;font-size:16.8px;color:#3d3934;letter-spacing:-0.564px;-webkit-text-stroke:0.2px #3d3934;right:216.96px;">12.6%</span>
<span class="t" style="top:814.03px;font-size:16.8px;color:#3b3732;letter-spacing:0.188px;left:1142.40px;">West North Cen...</span>
<span class="t" style="top:814.03px;font-size:16.8px;color:#3d3934;letter-spacing:-0.803px;-webkit-text-stroke:0.2px #3d3934;right:535.40px;">11.3%</span>
<span class="t" style="top:814.03px;font-size:16.8px;color:#3d3934;letter-spacing:-0.123px;-webkit-text-stroke:0.2px #3d3934;right:428.72px;">24.9%</span>
<span class="t" style="top:814.03px;font-size:16.8px;color:#ffffff;letter-spacing:-0.238px;-webkit-text-stroke:0.2px #ffffff;right:322.64px;">47.8%</span>
<span class="t" style="top:814.03px;font-size:16.8px;color:#ffffff;letter-spacing:-0.564px;-webkit-text-stroke:0.2px #ffffff;right:216.96px;">17.3%</span>
<span class="t" style="top:868.43px;font-size:16.8px;color:#3b3732;letter-spacing:0.398px;left:1142.40px;">South Atlantic</span>
<span class="t" style="top:868.43px;font-size:16.8px;color:#3d3934;letter-spacing:-0.569px;-webkit-text-stroke:0.2px #3d3934;right:535.17px;">9.7%</span>
<span class="t" style="top:868.43px;font-size:16.8px;color:#ffffff;letter-spacing:-0.123px;-webkit-text-stroke:0.2px #ffffff;right:428.72px;">26.2%</span>
<span class="t" style="top:868.43px;font-size:16.8px;color:#ffffff;letter-spacing:-0.238px;-webkit-text-stroke:0.2px #ffffff;right:322.64px;">44.8%</span>
<span class="t" style="top:868.43px;font-size:16.8px;color:#3d3934;letter-spacing:-1.114px;-webkit-text-stroke:0.2px #3d3934;right:217.51px;">10.1%</span>
<span class="t" style="top:922.83px;font-size:16.8px;color:#3b3732;letter-spacing:0.163px;left:1142.40px;">East South Cent...</span>
<span class="t" style="top:922.83px;font-size:16.8px;color:#ffffff;letter-spacing:-0.564px;-webkit-text-stroke:0.2px #ffffff;right:535.16px;">18.2%</span>
<span class="t" style="top:922.83px;font-size:16.8px;color:#3d3934;letter-spacing:-0.123px;-webkit-text-stroke:0.2px #3d3934;right:428.72px;">22.7%</span>
<span class="t" style="top:922.83px;font-size:16.8px;color:#ffffff;letter-spacing:-0.238px;-webkit-text-stroke:0.2px #ffffff;right:322.64px;">46.7%</span>
<span class="t" style="top:922.83px;font-size:16.8px;color:#3d3934;letter-spacing:-0.569px;-webkit-text-stroke:0.2px #3d3934;right:216.97px;">9.7%</span>
<span class="t" style="top:977.23px;font-size:16.8px;color:#3b3732;letter-spacing:0.061px;left:1142.40px;">West South Cen...</span>
<span class="t" style="top:977.23px;font-size:16.8px;color:#3d3934;letter-spacing:-0.564px;-webkit-text-stroke:0.2px #3d3934;right:535.16px;">12.3%</span>
<span class="t" style="top:977.23px;font-size:16.8px;color:#ffffff;letter-spacing:-0.123px;-webkit-text-stroke:0.2px #ffffff;right:428.72px;">25.5%</span>
<span class="t" style="top:977.23px;font-size:16.8px;color:#3d3934;letter-spacing:-0.238px;-webkit-text-stroke:0.2px #3d3934;right:322.64px;">40.3%</span>
<span class="t" style="top:977.23px;font-size:16.8px;color:#3d3934;letter-spacing:-0.564px;-webkit-text-stroke:0.2px #3d3934;right:216.96px;">12.6%</span>
<span class="t" style="top:1031.63px;font-size:16.8px;color:#3b3732;letter-spacing:0.323px;left:1142.40px;">Mountain</span>
<span class="t" style="top:1031.63px;font-size:16.8px;color:#3d3934;letter-spacing:-0.564px;-webkit-text-stroke:0.2px #3d3934;right:535.16px;">10.5%</span>
<span class="t" style="top:1031.63px;font-size:16.8px;color:#ffffff;letter-spacing:-0.123px;-webkit-text-stroke:0.2px #ffffff;right:428.72px;">28.4%</span>
<span class="t" style="top:1031.63px;font-size:16.8px;color:#ffffff;letter-spacing:-0.238px;-webkit-text-stroke:0.2px #ffffff;right:322.64px;">46.5%</span>
<span class="t" style="top:1031.63px;font-size:16.8px;color:#ffffff;letter-spacing:-0.564px;-webkit-text-stroke:0.2px #ffffff;right:216.96px;">13.5%</span>
<span class="t" style="left:477.3px;top:805.6px;font-size:16.4px;color:#3b3732;transform:translate(-50%,-50%) rotate(-90deg);letter-spacing:0.4px">Revenue</span>
</div>
</body></html>
